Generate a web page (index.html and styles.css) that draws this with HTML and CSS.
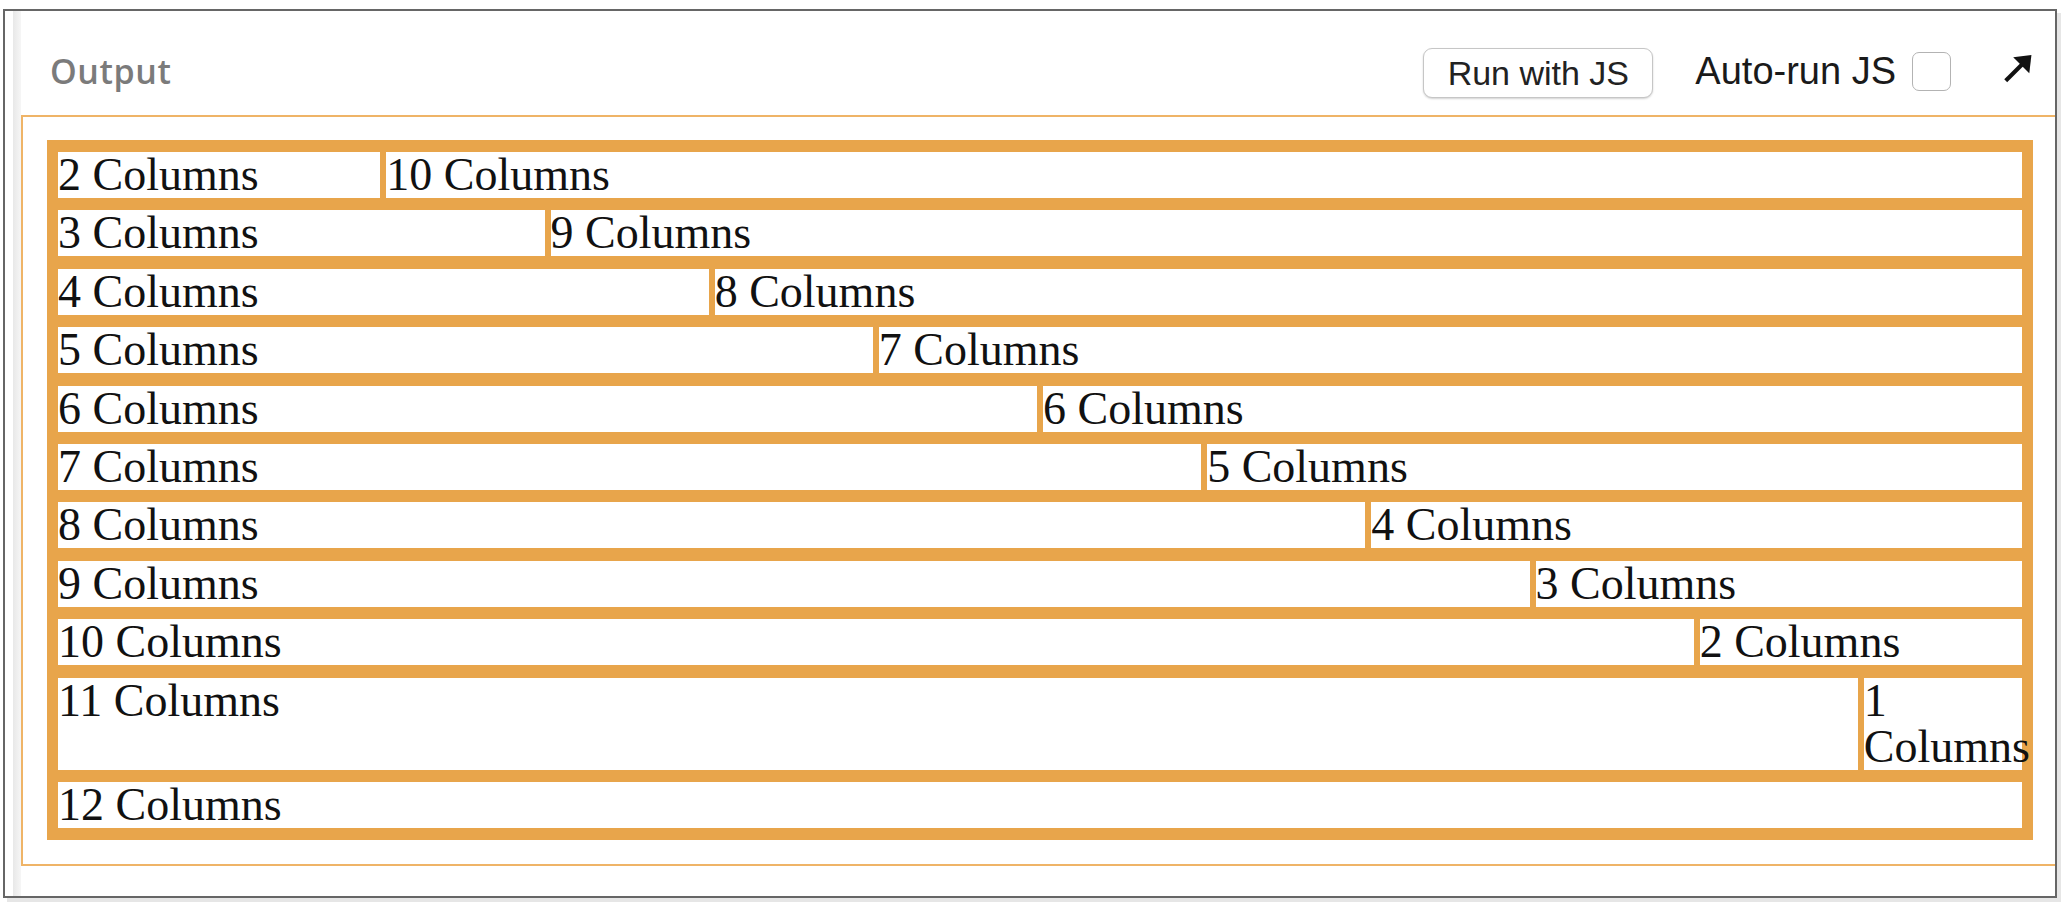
FILE: index.html
```html
<!DOCTYPE html>
<html>
<head>
<meta charset="utf-8">
<link rel="stylesheet" href="styles.css">
</head>
<body>
<div class="frame">
  <div class="gutter"></div>
  <div class="panel">
    <div class="header">
      <span class="title">Output</span>
      <button class="run-btn">Run with JS</button>
      <span class="auto">Auto-run JS</span>
      <span class="checkbox"></span>
      <svg class="arrow" viewBox="0 0 28 28" width="29" height="28">
        <line x1="3" y1="25" x2="18" y2="10" stroke="#111" stroke-width="3.8" stroke-linecap="butt"/>
        <polygon points="27,1 10,3 25,18" fill="#111"/>
      </svg>
    </div>
    <div class="output">
      <div class="grid">
        <div class="row"><div class="cell c2">2 Columns</div><div class="cell c10">10 Columns</div></div>
        <div class="row"><div class="cell c3">3 Columns</div><div class="cell c9">9 Columns</div></div>
        <div class="row"><div class="cell c4">4 Columns</div><div class="cell c8">8 Columns</div></div>
        <div class="row"><div class="cell c5">5 Columns</div><div class="cell c7">7 Columns</div></div>
        <div class="row"><div class="cell c6">6 Columns</div><div class="cell c6">6 Columns</div></div>
        <div class="row"><div class="cell c7">7 Columns</div><div class="cell c5">5 Columns</div></div>
        <div class="row"><div class="cell c8">8 Columns</div><div class="cell c4">4 Columns</div></div>
        <div class="row"><div class="cell c9">9 Columns</div><div class="cell c3">3 Columns</div></div>
        <div class="row"><div class="cell c10">10 Columns</div><div class="cell c2">2 Columns</div></div>
        <div class="row"><div class="cell c11">11 Columns</div><div class="cell c1">1 Columns</div></div>
        <div class="row"><div class="cell c12">12 Columns</div></div>
      </div>
    </div>
  </div>
</div>
</body>
</html>
```
FILE: styles.css
```css
html, body {
  margin: 0;
  padding: 0;
  background: #ffffff;
}
body {
  width: 2062px;
  height: 902px;
  overflow: hidden;
}
.frame {
  margin: 9px 0 0 3px;
  width: 2054px;
  box-sizing: border-box;
  border: 2px solid #666666;
  box-shadow: 4px 4px 0 #e6e6e6;
  display: flex;
  background: #ffffff;
}
.gutter {
  width: 8px;
  margin-left: 8px;
  background: linear-gradient(to right, #e8e8e8, #f6f6f6);
  flex: none;
}
.panel {
  flex: 1;
  display: flex;
  flex-direction: column;
  min-width: 0;
}
.header {
  height: 104px;
  box-sizing: border-box;
  padding: 16px 22px 0 29px;
  display: flex;
  align-items: center;
}
.title {
  font-family: "Open Sans", "Liberation Sans", sans-serif;
  font-weight: 600;
  font-size: 34px;
  letter-spacing: 0.6px;
  color: #7b7b7b;
  margin-right: auto;
}
.run-btn {
  width: 230px;
  height: 50px;
  margin-top: 4px;
  box-sizing: border-box;
  border: 1.5px solid #c6c6c6;
  border-radius: 9px;
  background: #ffffff;
  box-shadow: 0 1px 2px rgba(0, 0, 0, 0.18);
  font-family: "Liberation Sans", Arial, sans-serif;
  font-size: 34px;
  color: #222222;
  padding: 0;
}
.auto {
  margin-left: 42px;
  font-family: "Liberation Sans", Arial, sans-serif;
  font-size: 38px;
  color: #1a1a1a;
}
.checkbox {
  width: 39px;
  height: 39px;
  margin-left: 16px;
  box-sizing: border-box;
  border: 1.5px solid #b3b3b3;
  border-radius: 7px;
  background: #ffffff;
}
.arrow {
  margin-left: 51px;
  margin-top: -4px;
  width: 31px;
  height: 30px;
}
.output {
  border: 2px solid #efb467;
  border-right: none;
  padding: 23px 22px 24px 24px;
  margin-bottom: 30px;
}
.grid {
  background: #e8a54b;
  padding: 9px 8px;
  display: flex;
  flex-direction: column;
  gap: 6.4px;
}
.row {
  display: flex;
}
.cell {
  box-sizing: border-box;
  border: 3px solid #e8a54b;
  background: #ffffff;
  font-family: "Liberation Serif", "Times New Roman", serif;
  font-size: 46px;
  line-height: 46px;
  color: #111111;
  flex: none;
}
.c1 { width: calc(100% / 12); }
.c2 { width: calc(100% * 2 / 12); }
.c3 { width: calc(100% * 3 / 12); }
.c4 { width: calc(100% * 4 / 12); }
.c5 { width: calc(100% * 5 / 12); }
.c6 { width: calc(100% * 6 / 12); }
.c7 { width: calc(100% * 7 / 12); }
.c8 { width: calc(100% * 8 / 12); }
.c9 { width: calc(100% * 9 / 12); }
.c10 { width: calc(100% * 10 / 12); }
.c11 { width: calc(100% * 11 / 12); }
.c12 { width: 100%; }
```
